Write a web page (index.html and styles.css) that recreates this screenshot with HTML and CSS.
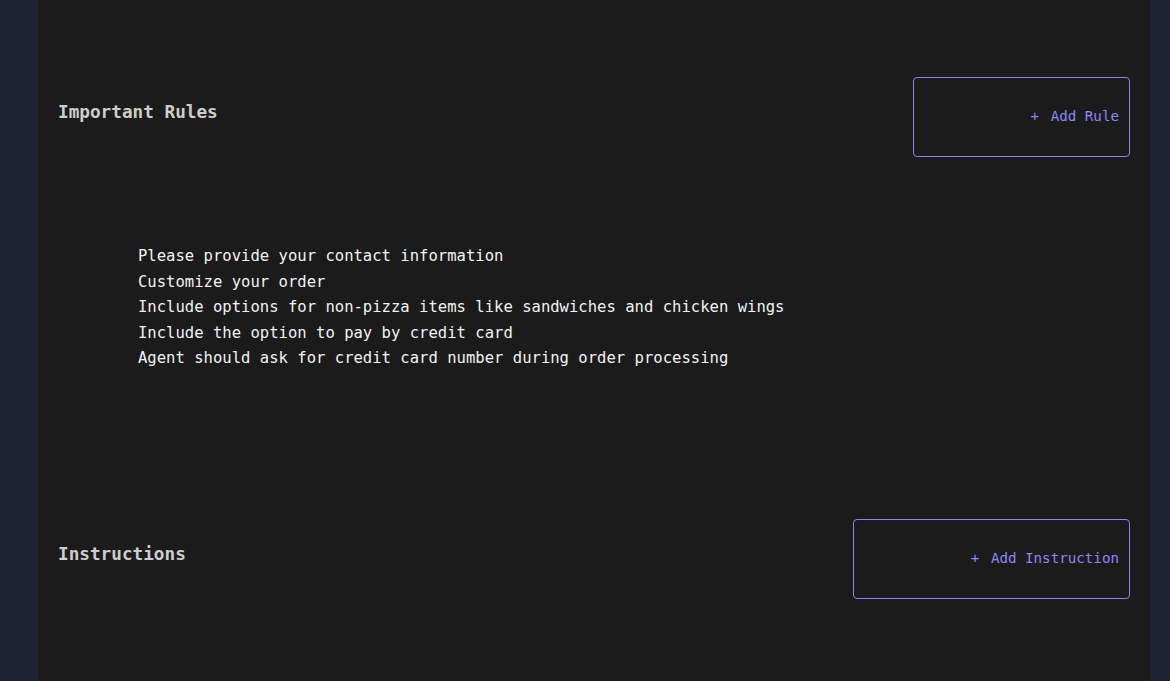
FILE: index.html
```html
<!DOCTYPE html>
<html lang="en">
<head>
<meta charset="utf-8">
<title>Rules</title>
<link rel="stylesheet" href="styles.css">
</head>
<body>
<main class="page">
  <section class="block rules">
    <div class="block-head">
      <h2 class="block-title">Important Rules</h2>
      <button class="add-btn" type="button"><span class="plus">+</span>Add Rule</button>
    </div>
    <ul class="rule-list">
      <li>Please provide your contact information</li>
      <li>Customize your order</li>
      <li>Include options for non-pizza items like sandwiches and chicken wings</li>
      <li>Include the option to pay by credit card</li>
      <li>Agent should ask for credit card number during order processing</li>
    </ul>
  </section>
  <section class="block instructions">
    <div class="block-head">
      <h2 class="block-title">Instructions</h2>
      <button class="add-btn" type="button"><span class="plus">+</span>Add Instruction</button>
    </div>
  </section>
</main>
</body>
</html>
```

FILE: styles.css
```css
html, body {
  margin: 0;
  padding: 0;
  height: 100%;
}
body {
  background: #1d2333;
  font-family: "DejaVu Sans Mono", "Liberation Mono", monospace;
  overflow: hidden;
}
.page {
  margin-left: 38px;
  width: 1112px;
  height: 681px;
  box-sizing: border-box;
  overflow: hidden;
  background: #1b1b1b;
  padding: 77px 20px 0 20px;
}
.block-head {
  display: flex;
  justify-content: space-between;
  align-items: flex-start;
}
.block-title {
  margin: 23px 0 0 0;
  font-size: 17.7px;
  line-height: 24px;
  font-weight: 600;
  color: #cdcdcd;
}
.add-btn {
  display: flex;
  align-items: center;
  font-family: inherit;
  font-size: 14.2px;
  line-height: 20px;
  color: #8f86f5;
  background: transparent;
  border: 1px solid #8f82e8;
  border-radius: 4px;
  padding: 28px 10px 30px 117px;
  cursor: pointer;
}
.plus {
  margin-right: 11.5px;
}
.rule-list {
  list-style: none;
  margin: 87px 0 0 0;
  padding: 0 0 0 80px;
  font-size: 15.57px;
  line-height: 25.5px;
  color: #f2f2f2;
}
.instructions {
  margin-top: 147px;
}
```
